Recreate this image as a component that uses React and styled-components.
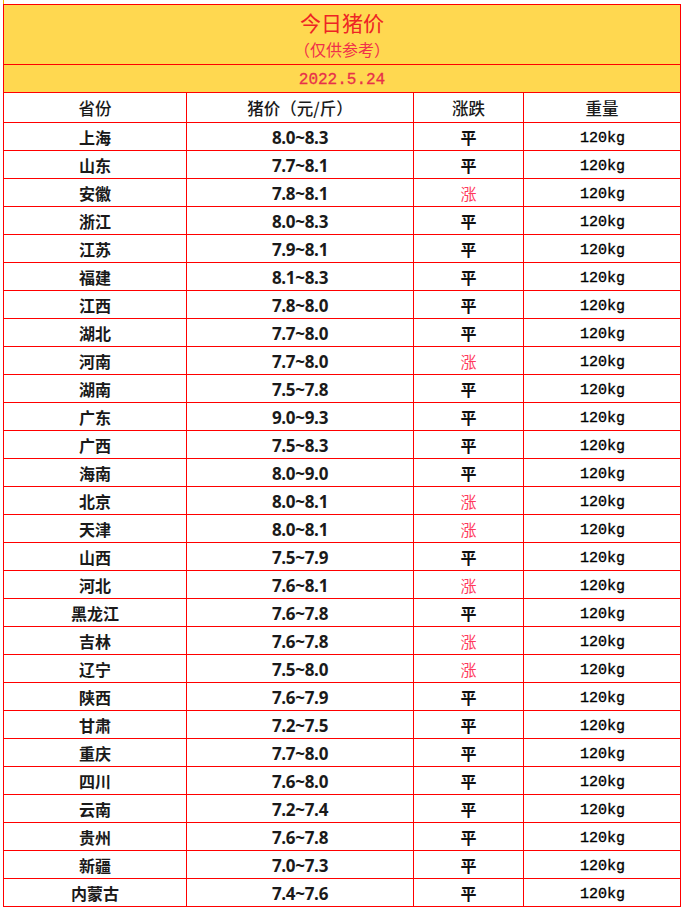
import React from "react"
import styled, {createGlobalStyle} from "styled-components"

const GlobalStyle = createGlobalStyle`
    body {
        margin: 0;
        background: #fff;
        font-family: "Noto Sans CJK SC", "Noto Sans", sans-serif;
    }
`

const Page = styled.div`
    padding: 0 0 0 3px;
`

const TopStub = styled.div`
    height: 4px;
    width: 0;
    border-left: 1px solid #f4b400;
`

const Sheet = styled.div`
    display: grid;
    grid-template-columns: 183px 227px 110px 157px;
    width: 677px;
    border-left: 1px solid #ff0000;
    border-top: 1px solid #ff0000;
`

const Cell = styled.div`
    box-sizing: border-box;
    height: ${(props) => props.h || 28}px;
    border-right: 1px solid #ff0000;
    border-bottom: 1px solid #ff0000;
    display: flex;
    align-items: center;
    justify-content: center;
    background: ${(props) => (props.yellow ? "#ffd850" : "#fff")};
    ${(props) => props.span && "grid-column: 1 / -1;"}
`

const TitleBox = styled(Cell)`
    flex-direction: column;
    justify-content: flex-start;
    padding-top: 2px;
`

const Title = styled.div`
    color: #ee2424;
    font-size: 21px;
    line-height: 30px;
`

const Sub = styled.div`
    color: #f0304a;
    font-size: 16px;
    line-height: 24px;
`

const DateText = styled.span`
    color: #e8304a;
    font-family: "Liberation Mono", monospace;
    font-size: 16px;
    font-weight: 400;
    padding-top: 2px;
    -webkit-text-stroke: 0.3px #e8304a;
`

const Head = styled.span`
    color: #1a1a1a;
    font-size: 16.5px;
    font-weight: 500;
`

const Province = styled.span`
    color: #1a1a1a;
    font-size: 16px;
    font-weight: 700;
`

const Price = styled.span`
    color: #1a1a1a;
    font-size: 17px;
    font-weight: 700;
    font-family: "Open Sans", "Noto Sans", sans-serif;
    letter-spacing: -0.3px;
    padding-top: 2px;
`

const Trend = styled.span`
    color: ${(props) => (props.up ? "#ff3a5c" : "#111")};
    font-size: 16px;
    font-weight: ${(props) => (props.up ? 400 : 700)};
    font-family: "Noto Sans CJK SC", serif;
`

const Weight = styled.span`
    color: #000;
    font-family: "Liberation Mono", monospace;
    font-size: 15px;
    font-weight: 400;
    -webkit-text-stroke: 0.35px #000;
    padding: 4px 0 0 1px;
`

const rows = [
    ["上海", "8.0~8.3", "平"],
    ["山东", "7.7~8.1", "平"],
    ["安徽", "7.8~8.1", "涨"],
    ["浙江", "8.0~8.3", "平"],
    ["江苏", "7.9~8.1", "平"],
    ["福建", "8.1~8.3", "平"],
    ["江西", "7.8~8.0", "平"],
    ["湖北", "7.7~8.0", "平"],
    ["河南", "7.7~8.0", "涨"],
    ["湖南", "7.5~7.8", "平"],
    ["广东", "9.0~9.3", "平"],
    ["广西", "7.5~8.3", "平"],
    ["海南", "8.0~9.0", "平"],
    ["北京", "8.0~8.1", "涨"],
    ["天津", "8.0~8.1", "涨"],
    ["山西", "7.5~7.9", "平"],
    ["河北", "7.6~8.1", "涨"],
    ["黑龙江", "7.6~7.8", "平"],
    ["吉林", "7.6~7.8", "涨"],
    ["辽宁", "7.5~8.0", "涨"],
    ["陕西", "7.6~7.9", "平"],
    ["甘肃", "7.2~7.5", "平"],
    ["重庆", "7.7~8.0", "平"],
    ["四川", "7.6~8.0", "平"],
    ["云南", "7.2~7.4", "平"],
    ["贵州", "7.6~7.8", "平"],
    ["新疆", "7.0~7.3", "平"],
    ["内蒙古", "7.4~7.6", "平"],
]

const App = () => {
    return (
        <Page>
            <GlobalStyle />
            <TopStub />
            <Sheet>
                <TitleBox span yellow h={60}>
                    <Title>今日猪价</Title>
                    <Sub>（仅供参考）</Sub>
                </TitleBox>
                <Cell span yellow h={28}>
                    <DateText>2022.5.24</DateText>
                </Cell>
                <Cell h={30}><Head>省份</Head></Cell>
                <Cell h={30}><Head>猪价（元/斤）</Head></Cell>
                <Cell h={30}><Head>涨跌</Head></Cell>
                <Cell h={30}><Head>重量</Head></Cell>
                {rows.map((item, i) => (
                    <React.Fragment key={i}>
                        <Cell><Province>{item[0]}</Province></Cell>
                        <Cell><Price>{item[1]}</Price></Cell>
                        <Cell><Trend up={item[2] === "涨"}>{item[2]}</Trend></Cell>
                        <Cell><Weight>120kg</Weight></Cell>
                    </React.Fragment>
                ))}
            </Sheet>
        </Page>
    )
}

export default App
